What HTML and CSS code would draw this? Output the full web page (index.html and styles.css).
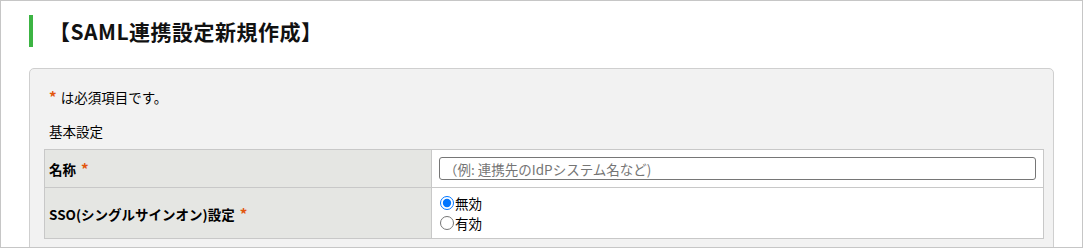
FILE: index.html
```html
<!DOCTYPE html>
<html lang="ja">
<head>
<meta charset="utf-8">
<link rel="stylesheet" href="styles.css">
</head>
<body>
<div class="page">
  <h1 class="title">【SAML連携設定新規作成】</h1>
  <div class="panel">
    <p class="note"><span class="req">*</span> は必須項目です。</p>
    <p class="section">基本設定</p>
    <table class="form">
      <tr class="row-name">
        <th><span>名称</span> <span class="req">*</span></th>
        <td><input class="text" type="text" placeholder="（例: 連携先のIdPシステム名など)"></td>
      </tr>
      <tr class="row-sso">
        <th><span>SSO(シングルサインオン)設定</span> <span class="req">*</span></th>
        <td>
          <label class="radio"><input type="radio" name="sso" checked>無効</label>
          <label class="radio"><input type="radio" name="sso">有効</label>
        </td>
      </tr>
    </table>
  </div>
</div>
</body>
</html>
```

FILE: styles.css
```css
* { box-sizing: border-box; }
html, body { margin: 0; padding: 0; background: #fff; }
body {
  font-family: "Noto Sans CJK JP", "Noto Sans", sans-serif;
  font-size: 13.5px;
  color: #000;
}
.page {
  width: 1083px;
  height: 248px;
  border: 1px solid #c6c6c6;
  overflow: hidden;
}
.title {
  margin: 14px 0 0 28px;
  height: 32px;
  border-left: 4px solid #3cb443;
  padding-left: 16px;
  font-size: 21px;
  letter-spacing: 0.5px;
  font-weight: bold;
  line-height: 32px;
  color: #111;
}
.panel {
  margin: 21px 0 0 28px;
  width: 1025px;
  height: 200px;
  background: #f2f2f2;
  border: 1px solid #cfcfcf;
  border-radius: 5px;
  padding: 18px 8px 0 14px;
}
.note {
  margin: 0 0 0 5px;
  line-height: 20px;
}
.section {
  margin: 14px 0 0 5px;
  line-height: 20px;
}
.req { color: #e2560e; font-weight: bold; font-size: 15px; }
.form .req { margin-left: 2px; }
.note .req { margin-right: 1px; }
.form {
  margin-top: 8px;
  width: 1000px;
  border-collapse: collapse;
  background: #fff;
}
.form th, .form td {
  border: 1px solid #c8c8c8;
  vertical-align: middle;
}
.form th {
  width: 387px;
  background: #e5e6e3;
  text-align: left;
  font-weight: bold;
  padding: 0 4px;
}
.form td { padding: 0 7px; }
.row-name th, .row-name td { height: 38px; }
.row-sso th, .row-sso td { height: 51px; }
.text {
  display: block;
  width: 597px;
  height: 23px;
  border: 1px solid #767676;
  border-radius: 3px;
  padding: 0 4px;
  font-family: inherit;
  font-size: 13.5px;
  background: #fff;
}
.text::placeholder { color: #757575; }
.radio {
  display: flex;
  align-items: center;
  line-height: 20px;
}
.radio input {
  margin: 0 1px 0 1px;
  width: 14px;
  height: 14px;
}
```
